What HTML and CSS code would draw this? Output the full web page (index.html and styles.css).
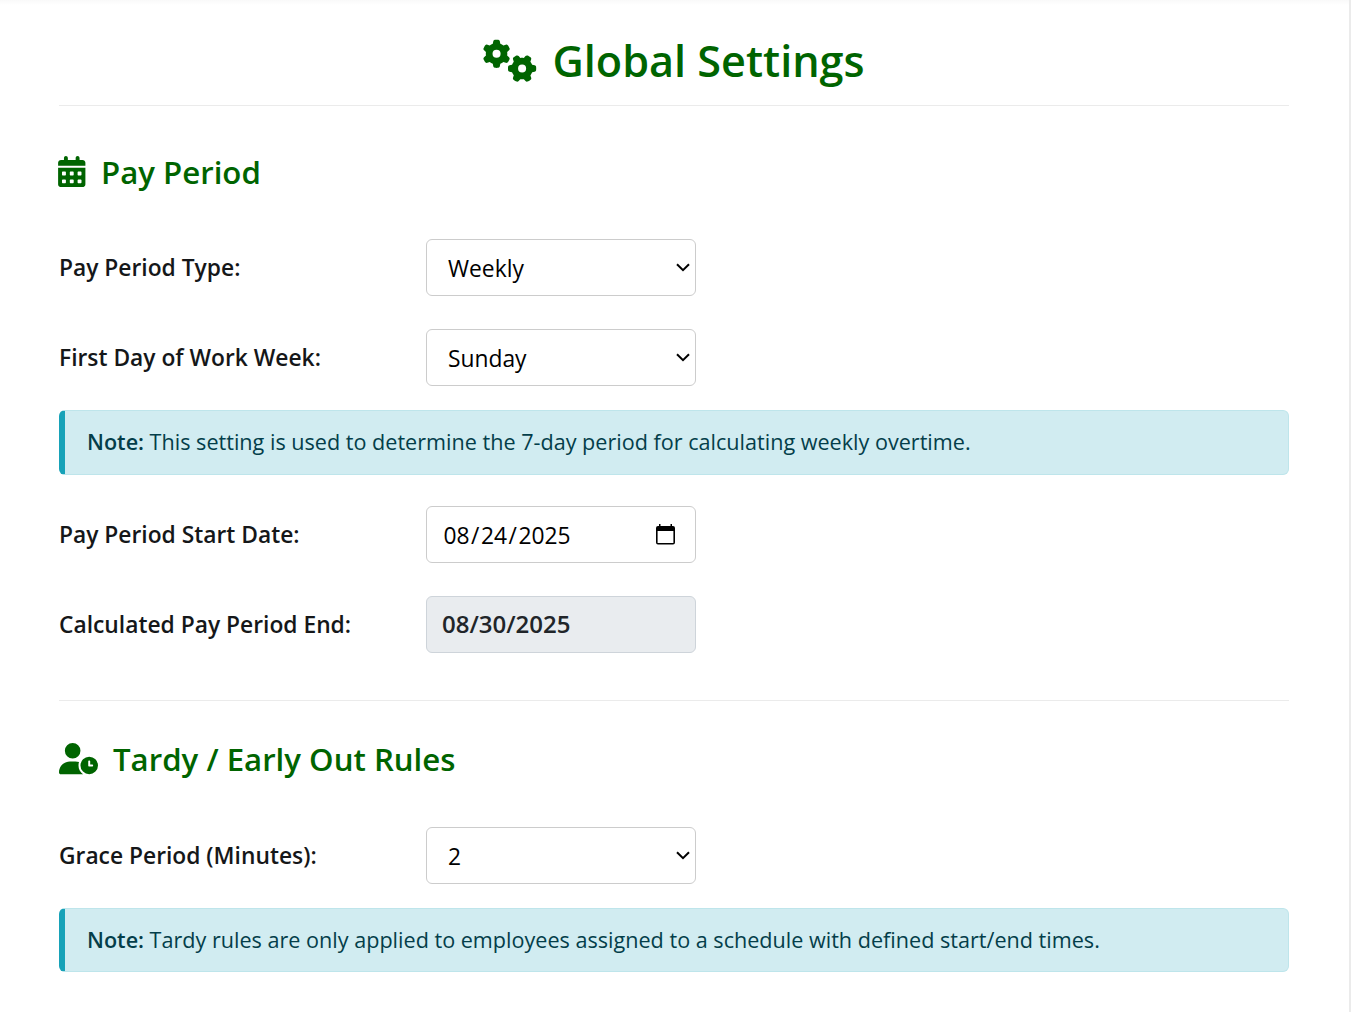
FILE: index.html
```html
<!DOCTYPE html>
<html lang="en">
<head>
<meta charset="utf-8">
<title>Global Settings</title>
<link rel="stylesheet" href="styles.css">
</head>
<body>
<main class="panel">
  <h1 class="title">
    <svg class="title-icon" viewBox="0 0 640 512" fill="currentColor"><defs><path id="gear" d="M308.5 135.3c7.1-6.3 9.9-16.2 6.2-25c-2.3-5.3-4.8-10.5-7.6-15.5L304 89.4c-3-5-6.3-9.9-9.8-14.6c-5.7-7.6-15.7-10.1-24.7-7.1l-28.2 9.3c-10.7-8.8-23-16-36.2-20.9L199 27.1c-1.9-9.3-9.1-16.7-18.5-17.8C173.9 8.4 167.2 8 160.4 8h-.7c-6.8 0-13.5 .4-20.1 1.2c-9.4 1.1-16.6 8.6-18.5 17.8L115 56.1c-13.3 5-25.5 12.1-36.2 20.9L50.5 67.8c-9-3-19-.5-24.7 7.1c-3.5 4.7-6.8 9.6-9.9 14.6l-3 5.3c-2.8 5-5.3 10.2-7.6 15.6c-3.7 8.7-.9 18.6 6.2 25l22.2 19.8C32.6 161.9 32 168.9 32 176s.6 14.1 1.7 20.9L11.5 216.7c-7.1 6.3-9.9 16.2-6.2 25c2.3 5.3 4.8 10.5 7.6 15.6l3 5.2c3 5.1 6.3 9.9 9.9 14.6c5.7 7.6 15.7 10.1 24.7 7.1l28.2-9.3c10.7 8.8 23 16 36.2 20.9l6.1 29.1c1.9 9.3 9.1 16.7 18.5 17.8c6.7 .8 13.5 1.2 20.4 1.2s13.7-.4 20.4-1.2c9.4-1.1 16.6-8.6 18.5-17.8l6.1-29.1c13.3-5 25.5-12.1 36.2-20.9l28.2 9.3c9 3 19 .5 24.7-7.1c3.5-4.7 6.8-9.5 9.8-14.6l3.1-5.4c2.8-5 5.3-10.2 7.6-15.5c3.7-8.7 .9-18.6-6.2-25l-22.2-19.8c1.1-6.8 1.7-13.8 1.7-20.9s-.6-14.1-1.7-20.9l22.2-19.8zM112 176a48 48 0 1 1 96 0 48 48 0 1 1 -96 0z"/></defs><use href="#gear"/><use href="#gear" transform="translate(464 352) rotate(90) translate(-160 -176)"/></svg>
    <span>Global Settings</span>
  </h1>

  <section class="section">
    <h2 class="heading">
      <svg class="calendar-icon" viewBox="0 0 448 512" fill="currentColor"><path d="M128 0c17.7 0 32 14.3 32 32V64H288V32c0-17.7 14.3-32 32-32s32 14.3 32 32V64h48c26.5 0 48 21.5 48 48v48H0V112C0 85.5 21.5 64 48 64H96V32c0-17.7 14.3-32 32-32zM0 192H448V464c0 26.5-21.5 48-48 48H48c-26.5 0-48-21.5-48-48V192zm64 80v32c0 8.8 7.2 16 16 16h32c8.8 0 16-7.2 16-16V272c0-8.8-7.2-16-16-16H80c-8.8 0-16 7.2-16 16zm128 0v32c0 8.8 7.2 16 16 16h32c8.8 0 16-7.2 16-16V272c0-8.8-7.2-16-16-16H208c-8.8 0-16 7.2-16 16zm144-16c-8.8 0-16 7.2-16 16v32c0 8.8 7.2 16 16 16h32c8.8 0 16-7.2 16-16V272c0-8.8-7.2-16-16-16H336zM64 400v32c0 8.8 7.2 16 16 16h32c8.8 0 16-7.2 16-16V400c0-8.8-7.2-16-16-16H80c-8.8 0-16 7.2-16 16zm144-16c-8.8 0-16 7.2-16 16v32c0 8.8 7.2 16 16 16h32c8.8 0 16-7.2 16-16V400c0-8.8-7.2-16-16-16H208zm112 16v32c0 8.8 7.2 16 16 16h32c8.8 0 16-7.2 16-16V400c0-8.8-7.2-16-16-16H336c-8.8 0-16 7.2-16 16z"/></svg>
      <span>Pay Period</span>
    </h2>
    <div class="row">
      <span class="label">Pay Period Type:</span>
      <div class="field select"><span>Weekly</span><svg class="chevron" viewBox="0 0 14 9"><path d="M1 1.2l6 6 6-6" fill="none" stroke="currentColor" stroke-width="2"/></svg></div>
    </div>
    <div class="row">
      <span class="label">First Day of Work Week:</span>
      <div class="field select"><span>Sunday</span><svg class="chevron" viewBox="0 0 14 9"><path d="M1 1.2l6 6 6-6" fill="none" stroke="currentColor" stroke-width="2"/></svg></div>
    </div>
    <p class="note"><strong>Note:</strong> This setting is used to determine the 7-day period for calculating weekly overtime.</p>
    <div class="row">
      <span class="label">Pay Period Start Date:</span>
      <div class="field date"><span class="date-parts"><span>08</span><span class="slash">/</span><span>24</span><span class="slash">/</span><span>2025</span></span><svg class="picker" viewBox="0 0 19 21"><path fill="currentColor" fill-rule="evenodd" d="M3 0h1.500v2h10V0h1.500v2h1a2 2 0 0 1 2 2v14.500a2 2 0 0 1-2 2H2a2 2 0 0 1-2-2V4a2 2 0 0 1 2-2h1zM1.600 7v12h15.800V7z"/></svg></div>
    </div>
    <div class="row">
      <span class="label">Calculated Pay Period End:</span>
      <div class="field readonly"><span>08/30/2025</span></div>
    </div>
  </section>

  <section class="section divided">
    <h2 class="heading">
      <svg class="user-icon" viewBox="0 0 640 512" fill="currentColor"><path d="M224 0a128 128 0 1 1 0 256A128 128 0 1 1 224 0zM178.3 304h91.4c20.6 0 40.4 3.5 58.8 9.9C323 331 320 349.1 320 368c0 59.5 29.5 112.1 74.8 144H29.7C13.3 512 0 498.7 0 482.3C0 383.8 79.8 304 178.3 304zM352 368a144 144 0 1 1 288 0 144 144 0 1 1 -288 0zm144-80c-8.8 0-16 7.2-16 16v64c0 8.8 7.2 16 16 16h48c8.8 0 16-7.2 16-16s-7.2-16-16-16H512V304c0-8.8-7.2-16-16-16z"/></svg>
      <span>Tardy / Early Out Rules</span>
    </h2>
    <div class="row">
      <span class="label">Grace Period (Minutes):</span>
      <div class="field select"><span>2</span><svg class="chevron" viewBox="0 0 14 9"><path d="M1 1.2l6 6 6-6" fill="none" stroke="currentColor" stroke-width="2"/></svg></div>
    </div>
    <p class="note note-last"><strong>Note:</strong> Tardy rules are only applied to employees assigned to a schedule with defined start/end times.</p>
  </section>
</main>
</body>
</html>
```
FILE: styles.css
```css
* { box-sizing: border-box; }
body {
  margin: 0;
  height: 1012px;
  overflow: hidden;
  background: #fff;
  font-family: "Open Sans", sans-serif;
  color: #212529;
}
.panel {
  width: 1351px;
  height: 1012px;
  padding: 20px 60px 0 59px;
  border-right: 2px solid #ebebeb;
  background: linear-gradient(#f9f9f9, #fff 5px);
}
.title {
  display: flex;
  justify-content: center;
  align-items: center;
  gap: 15px;
  height: 86px;
  margin: 0;
  padding-bottom: 4px;
  border-bottom: 1px solid #ebebeb;
  color: #006400;
  font-size: 43.2px;
  font-weight: 600;
}
.title-icon { width: 54px; height: 43px; }
.section { display: flex; flex-direction: column; }
.heading {
  display: flex;
  align-items: center;
  gap: 15.5px;
  height: 44px;
  margin: 44px 0 45px -1px;
  color: #006400;
  font-size: 31.2px;
  font-weight: 600;
}
.calendar-icon { width: 27.5px; height: 31.2px; margin-top: -1px; }
.user-icon { width: 39px; height: 31.2px; }
.row {
  display: flex;
  align-items: center;
  height: 57px;
  margin-bottom: 33px;
}
.label {
  width: 367px;
  font-size: 22.8px;
  font-weight: 600;
  color: #151719;
}
.field {
  display: flex;
  align-items: center;
  justify-content: space-between;
  width: 270px;
  height: 57px;
  border: 1px solid #ccc;
  border-radius: 6px;
  color: #000;
  font-size: 22.8px;
}
.select { padding: 2px 5px 0 21px; }
.chevron { width: 14px; height: 9px; margin-top: -3px; }
.date { padding: 2px 20px 0 16.5px; }
.date-parts { display: flex; }
.slash { margin: 0 1.5px; }
.picker { width: 19px; height: 21px; margin-top: -3px; }
.readonly {
  padding: 0 0 2px 15px;
  background: #e9ecef;
  border-color: #ced4da;
  color: #212529;
  font-size: 24px;
  font-weight: 600;
}
.note {
  height: 65px;
  margin: -9px 0 31px;
  padding: 0 22px;
  border: 1px solid #bee5eb;
  border-left: 6px solid #17a2b8;
  border-radius: 6px;
  background: #d1ecf1;
  color: #043e4a;
  font-size: 21.6px;
  line-height: 61px;
}
.note strong { font-weight: 600; }
.note-last { height: 64px; }
.divided { margin-top: 14px; border-top: 1px solid #ebebeb; }
.divided .heading { margin: 36px 0 46px -0.5px; }
```
